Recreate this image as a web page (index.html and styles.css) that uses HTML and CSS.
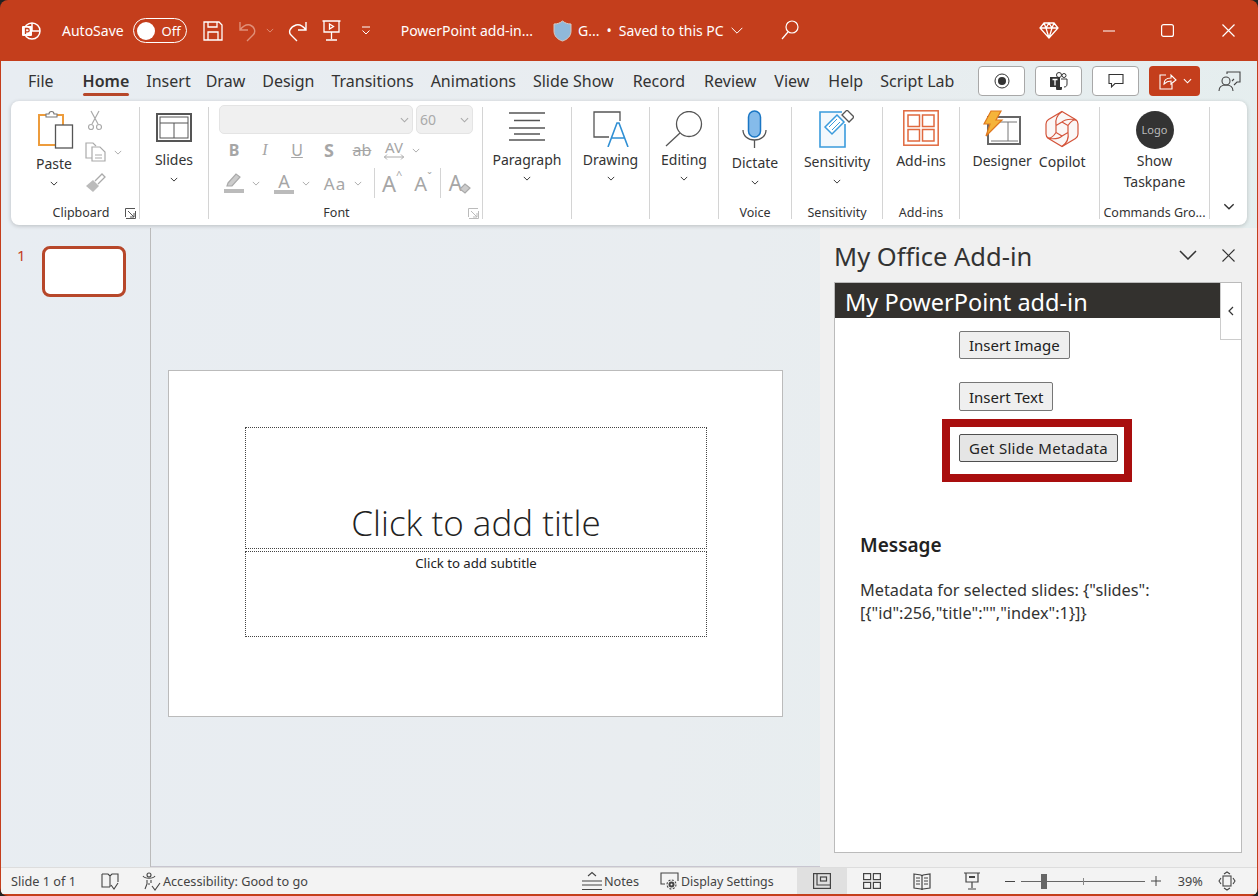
FILE: index.html
```html
<!DOCTYPE html>
<html lang="en">
<head>
  <meta charset="UTF-8" />
  <title>PowerPoint add-in</title>
  <link rel="stylesheet" href="styles.css">
</head>
<body>
<svg class="sprite" width="0" height="0">
  <symbol id="chev" viewBox="0 0 10 6"><path d="M1 1l4 4 4-4" fill="none" stroke="currentColor" stroke-width="1.2"/></symbol>
  <symbol id="chev-thin" viewBox="0 0 18 10"><path d="M1 1l8 8 8-8" fill="none" stroke="currentColor" stroke-width="1.5"/></symbol>
  <symbol id="launcher" viewBox="0 0 11 11"><path d="M.5 9V.5H10M3 3l6 6M9 5v4H5M1 10.5h9.5V3" fill="none" stroke="currentColor"/></symbol>
</svg>
<div class="window">
  <header class="titlebar">
    <svg class="tb-logo" width="20" height="20" viewBox="0 0 20 20" fill="none" stroke="#fff" stroke-width="1.5"><circle cx="11" cy="10" r="8"/><path d="M11 2v8h8"/><rect x="1" y="5" width="10" height="10" rx="1" fill="#fff" stroke="none"/><path d="M4.500 13V7.500h2a1.600 1.600 0 010 3.400h-2" stroke="#c43e1c" stroke-width="1.300"/></svg>
    <span class="tb-autosave">AutoSave</span>
    <span class="toggle"><i class="knob"></i><span>Off</span></span>
    <svg class="tb-save" width="20" height="20" viewBox="0 0 20 20" fill="none" stroke="#fff" stroke-width="1.300"><path d="M1 1h15l3 3v15H1zM5 1v5h9V1M5 19v-8h10v8"/></svg>
    <svg class="tb-undo" width="21" height="22" viewBox="0 0 21 22" fill="none" stroke="#e08f78" stroke-width="1.400"><path d="M2 2v8h8M2 10c3-4 6-6 10-5 5 2 6 7 3 10l-6 6"/></svg>
    <svg class="tb-undo-c" width="8" height="5"><use href="#chev" color="#e08f78"/></svg>
    <svg class="tb-redo" width="19" height="22" viewBox="0 0 19 22" fill="none" stroke="#fff" stroke-width="1.400"><path d="M18 2v8h-8M18 10c-3-4-6-6-10-5-6 2-8 7-5 10l6 6"/></svg>
    <svg class="tb-show" width="19" height="21" viewBox="0 0 19 21" fill="none" stroke="#fff" stroke-width="1.300"><path d="M.5 1h18M2 1v11h15V1M9.500 12v7M4 20h11"/><path d="M7.500 4l4 2.500-4 2.500z"/></svg>
    <svg class="tb-more" width="12" height="10" viewBox="0 0 12 10" fill="none" stroke="#fff"><path d="M2 1h8M2.500 4.500L6 8l3.500-3.500"/></svg>
    <span class="tb-file">PowerPoint add-in...</span>
    <svg class="tb-shield" width="19" height="22" viewBox="0 0 19 22"><path d="M9.500 1c2.500 2 5 3 8.500 3v7c0 5-3.500 8.500-8.500 10C4.500 19.500 1 16 1 11V4c3.500 0 6-1 8.500-3z" fill="#8fb8da" stroke="#d9c8c0"/></svg>
    <span class="tb-g">G...</span>
    <span class="tb-dot">•</span>
    <span class="tb-saved">Saved to this PC</span>
    <svg class="tb-saved-c" width="12" height="7"><use href="#chev-thin" color="#fff"/></svg>
    <svg class="tb-search" width="18" height="20" viewBox="0 0 18 20" fill="none" stroke="#fff" stroke-width="1.200"><circle cx="11" cy="7" r="6"/><path d="M7 12l-6 7"/></svg>
    <svg class="tb-gem" width="20" height="17" viewBox="0 0 20 17" fill="none" stroke="#fff" stroke-width="1.300"><path d="M5 1h10l4 5-9 10L1 6zM1 6h18M7 6l3 10 3-10M5 1l2 5 3-5 3 5 2-5"/></svg>
    <svg class="tb-min" width="12" height="2"><path d="M0 1h12" stroke="#fff" stroke-width="1.200"/></svg>
    <svg class="tb-max" width="13" height="13" viewBox="0 0 13 13"><rect x=".6" y=".6" width="11.800" height="11.800" rx="2" fill="none" stroke="#fff" stroke-width="1.200"/></svg>
    <svg class="tb-close" width="13" height="13" viewBox="0 0 13 13"><path d="M.5.5l12 12M12.500.5l-12 12" stroke="#fff" stroke-width="1.200"/></svg>
  </header>

  <div class="shell">
  <nav class="tabs">
    <a class="tab tab-file">File</a>
    <a class="tab tab-active">Home</a>
    <a class="tab">Insert</a>
    <a class="tab tab-draw">Draw</a>
    <a class="tab">Design</a>
    <a class="tab">Transitions</a>
    <a class="tab">Animations</a>
    <a class="tab">Slide Show</a>
    <a class="tab tab-nudge">Record</a>
    <a class="tab tab-nudge">Review</a>
    <a class="tab tab-view">View</a>
    <a class="tab tab-nudge">Help</a>
    <a class="tab">Script Lab</a>
    <div class="tab-actions">
      <button class="pill"><svg width="16" height="16" viewBox="0 0 16 16"><circle cx="8" cy="8" r="7" fill="none" stroke="#333"/><circle cx="8" cy="8" r="4" fill="#333"/></svg></button>
      <button class="pill"><svg width="19" height="18" viewBox="0 0 19 18"><circle cx="15" cy="3.500" r="2" fill="none" stroke="#333"/><circle cx="10" cy="3" r="2.500" fill="none" stroke="#333"/><path d="M12 7h6v5c0 2-1 3-3 3" fill="none" stroke="#333"/><rect x="1" y="5" width="10" height="10" fill="#333"/><path d="M3.500 7.500h5M6 7.500v6" stroke="#fff" stroke-width="1.300"/><path d="M7 15h6v1a2 2 0 01-6 0z" fill="#333"/></svg></button>
      <button class="pill"><svg width="16" height="16" viewBox="0 0 16 16" fill="none" stroke="#333" stroke-width="1.100"><path d="M1 1.500h14v9H7L3.500 14v-3.500H1z"/></svg></button>
      <button class="share"><svg width="19" height="19" viewBox="0 0 19 19" fill="none" stroke="#fff" stroke-width="1.100"><path d="M8 3H2v14h12v-6M6 12c0-4 3-6 7-6V3l5 5-5 4V9c-3 0-5 1-7 3z"/></svg><svg width="9" height="6"><use href="#chev" color="#fff"/></svg></button>
      <svg class="people" width="23" height="21" viewBox="0 0 23 21" fill="none" stroke="#444" stroke-width="1.100"><path d="M9 3V1h13v10h-3l-3 3M16 8l-2 2"/><circle cx="8" cy="10" r="4"/><path d="M1 20c0-4 3-6 7-6s7 2 7 6"/></svg>
    </div>
  </nav>

  <section class="ribbon">
    <div class="group g-clip">
      <div class="group-body clip-body">
        <div class="big paste">
          <svg width="36" height="39" viewBox="0 0 36 39" fill="none"><rect x="1" y="5" width="24" height="30" fill="#fff" stroke="#ed9c3c" stroke-width="2"/><path d="M8 7V4h3a2.500 2.500 0 015 0h3v3z" fill="#fff" stroke="#777" stroke-width="1.100"/><rect x="17.500" y="15" width="17" height="23" fill="#fff" stroke="#555" stroke-width="1.300"/></svg>
          <span class="big-label">Paste</span>
          <svg class="big-chev" width="8" height="5"><use href="#chev"/></svg>
        </div>
        <div class="clip-tools">
          <svg width="14" height="21" viewBox="0 0 14 21" fill="none" stroke="#aaa" stroke-width="1.200"><path d="M3 1l7 13M11 1L4 14"/><circle cx="3" cy="17" r="2.500"/><circle cx="11" cy="17" r="2.500"/></svg>
          <div class="copy-row">
            <svg width="21" height="20" viewBox="0 0 21 20" fill="none" stroke="#aaa" stroke-width="1.200"><path d="M7 16H1V1h7l3 3"/><path d="M7 5h8l5 5v9H7zM10 13h7M10 16h7"/></svg>
            <svg width="8" height="5"><use href="#chev" color="#aaa"/></svg>
          </div>
          <svg width="21" height="20" viewBox="0 0 21 20"><path d="M1 13l7-6 6 6-6 6z" fill="#bbb"/><path d="M10 8l7-7 3 3-7 7" fill="none" stroke="#aaa" stroke-width="1.300"/></svg>
        </div>
      </div>
      <div class="group-label label-clip">Clipboard</div>
      <svg class="launcher" width="11" height="11"><use href="#launcher"/></svg>
    </div>

    <div class="group g-slides">
      <div class="group-body">
        <div class="big slides">
          <svg width="36" height="29" viewBox="0 0 36 29" fill="none" stroke="#555"><rect x="1" y="1" width="34" height="27" stroke-width="2"/><rect x="4" y="4" width="28" height="21" stroke-width="1"/><path d="M4 10h28M18 10v15"/></svg>
          <span class="big-label">Slides</span>
          <svg class="big-chev" width="8" height="5"><use href="#chev"/></svg>
        </div>
      </div>
      <div class="group-label"></div>
    </div>

    <div class="group g-font">
      <div class="font-body">
        <div class="combos">
          <div class="combo combo-name"><svg width="9" height="6"><use href="#chev" color="#aaa"/></svg></div>
          <div class="combo combo-size"><span>60</span><svg width="9" height="6"><use href="#chev" color="#aaa"/></svg></div>
        </div>
        <div class="font-row row-one">
          <b class="fi fi-b">B</b><i class="fi fi-i">I</i><u class="fi fi-u">U</u><b class="fi fi-s">S</b><s class="fi fi-ab">ab</s>
          <span class="fi fi-av">AV<svg width="20" height="6" viewBox="0 0 20 6" fill="none" stroke="#aaa"><path d="M0 3h20M3 .5L.5 3 3 5.500M17 .5L19.500 3 17 5.500"/></svg></span>
          <svg class="fc" width="8" height="5"><use href="#chev" color="#aaa"/></svg>
        </div>
        <div class="font-row row-two">
          <span class="swatch sw-hl"><svg width="20" height="15" viewBox="0 0 20 15"><path d="M4 10l8-9 4 3-8 9H3z" fill="#ccc" stroke="#aaa" stroke-width="1.200"/></svg><i></i></span>
          <svg class="fc" width="8" height="5"><use href="#chev" color="#aaa"/></svg>
          <span class="swatch sw-a">A<i></i></span>
          <svg class="fc" width="8" height="5"><use href="#chev" color="#aaa"/></svg>
          <span class="fi fi-aa">Aa</span>
          <svg class="fc fc-aa" width="8" height="5"><use href="#chev" color="#aaa"/></svg>
          <span class="fsep"></span>
          <span class="fi fi-grow">A<sup>^</sup></span>
          <span class="fi fi-shrink">A<sup>ˇ</sup></span>
          <span class="fsep"></span>
          <span class="fi fi-clear">A<svg width="12" height="12" viewBox="0 0 12 12"><path d="M1 7l5-5 5 4-5 5z" fill="#ccc" stroke="#aaa" stroke-width="1.200"/></svg></span>
        </div>
      </div>
      <div class="group-label label-font">Font</div>
      <svg class="launcher" width="11" height="11"><use href="#launcher" color="#bbb"/></svg>
    </div>

    <div class="group g-para">
      <div class="group-body">
        <div class="big up up-para">
          <svg width="38" height="30" viewBox="0 0 38 30" stroke="#555" stroke-width="1.300"><path d="M1 2h36M6 9.500h26M1 17h36M6 23h26M1 29h36"/></svg>
          <span class="big-label">Paragraph</span>
          <svg class="big-chev" width="8" height="5"><use href="#chev"/></svg>
        </div>
      </div>
      <div class="group-label"></div>
    </div>

    <div class="group g-draw">
      <div class="group-body">
        <div class="big up">
          <svg width="36" height="36" viewBox="0 0 36 36" fill="none"><path d="M16 26H1V1h26v9" stroke="#555" stroke-width="1.300"/><path d="M15 36l9-24h2l9 24M18.500 27h13" stroke="#2f8fd4" stroke-width="1.600"/></svg>
          <span class="big-label">Drawing</span>
          <svg class="big-chev" width="8" height="5"><use href="#chev"/></svg>
        </div>
      </div>
      <div class="group-label"></div>
    </div>

    <div class="group g-edit">
      <div class="group-body">
        <div class="big up">
          <svg width="38" height="36" viewBox="0 0 38 36" fill="none" stroke="#555" stroke-width="1.300"><circle cx="24" cy="13" r="12.500"/><path d="M15 22L1 35"/></svg>
          <span class="big-label">Editing</span>
          <svg class="big-chev" width="8" height="5"><use href="#chev"/></svg>
        </div>
      </div>
      <div class="group-label"></div>
    </div>

    <div class="group g-voice">
      <div class="group-body">
        <div class="big low">
          <svg width="25" height="38" viewBox="0 0 25 38" fill="none"><rect x="6.500" y="1" width="12" height="26" rx="6" fill="#85bbea" stroke="#1a76c4" stroke-width="1.500"/><path d="M1 20c0 6 5 10 11.500 10S24 26 24 20M12.500 30v8" stroke="#555" stroke-width="1.300"/></svg>
          <span class="big-label">Dictate</span>
          <svg class="big-chev" width="8" height="5"><use href="#chev"/></svg>
        </div>
      </div>
      <div class="group-label">Voice</div>
    </div>

    <div class="group g-sens">
      <div class="group-body">
        <div class="big low tight">
          <svg width="35" height="38" viewBox="0 0 35 38" fill="none"><path d="M23 2H1v35h25V14" fill="#f3f8fc" stroke="#3a9bdc" stroke-width="1.600"/><path d="M6 17L18 5l7 7L13 24z" fill="#fff" stroke="#3a9bdc" stroke-width="1.500"/><path d="M10 17l8-8M13 20l8-8" stroke="#3a9bdc"/><path d="M23 5l5-5 7 7-5 5z" fill="#fff" stroke="#555" stroke-width="1.300"/></svg>
          <span class="big-label">Sensitivity</span>
          <svg class="big-chev" width="8" height="5"><use href="#chev"/></svg>
        </div>
      </div>
      <div class="group-label">Sensitivity</div>
    </div>

    <div class="group g-addins">
      <div class="group-body">
        <div class="big low">
          <svg width="36" height="36" viewBox="0 0 36 36" fill="none" stroke="#e0693f" stroke-width="1.500"><rect x=".8" y=".8" width="34.400" height="34.400"/><rect x="5" y="5" width="11.500" height="11.500"/><rect x="19.500" y="5" width="11.500" height="11.500"/><rect x="5" y="19.500" width="11.500" height="11.500"/><rect x="19.500" y="19.500" width="11.500" height="11.500"/></svg>
          <span class="big-label">Add-ins</span>
        </div>
      </div>
      <div class="group-label">Add-ins</div>
    </div>

    <div class="group g-design">
      <div class="group-body design-body">
        <div class="big low">
          <svg width="38" height="36" viewBox="0 0 38 36" fill="none"><rect x="5" y="7" width="32" height="27" fill="#fff" stroke="#666" stroke-width="2"/><path d="M10 12h24M25 12v19M8 31h27" stroke="#777"/><path d="M8 1h10l-5 9h6L3 26l4-12H1z" fill="#f5b43a" stroke="#e0781e" stroke-width="1.200"/></svg>
          <span class="big-label">Designer</span>
        </div>
        <div class="big low tight">
          <svg width="36" height="38" viewBox="0 0 36 38" fill="none" stroke="#d4543a" stroke-width="1.200"><path d="M18 1.500L31.500 9.500Q34 11 34 14V24Q34 27 31.500 28.500L18 36.500 4.500 28.500Q2 27 2 24V14Q2 11 4.500 9.500Z" fill="#fbf7f6"/><path d="M18 12l6 3.500v7L18 26l-6-3.500v-7zM12 15.500C11 10 13 5 18 1.500M24 15.500C27 11 30 9 33 10.500M24 22.500C25 28 23 33 18 36.500M12 22.500C9 27 6 29 3 27.500M18 12C21 9 27 9 31.500 9.500M18 26C15 29 9 29 4.500 28.500"/></svg>
          <span class="big-label">Copilot</span>
        </div>
      </div>
      <div class="group-label"></div>
    </div>

    <div class="group g-cmd">
      <div class="group-body">
        <div class="big low">
          <span class="logo-disc">Logo</span>
          <span class="big-label two-line">Show<br>Taskpane</span>
        </div>
      </div>
      <div class="group-label">Commands Gro...</div>
    </div>

    <svg class="ribbon-collapse" width="12" height="7"><use href="#chev"/></svg>
  </section>

  <main class="work">
    <aside class="thumbs">
      <span class="thumb-num">1</span>
      <div class="thumb"></div>
    </aside>
    <section class="canvas">
      <div class="slide">
        <div class="ph ph-title">Click to add title</div>
        <div class="ph ph-sub">Click to add subtitle</div>
      </div>
    </section>
    <aside class="pane">
      <div class="pane-head">
        <h2>My Office Add-in</h2>
        <svg width="18" height="10"><use href="#chev-thin"/></svg>
        <svg width="13" height="13" viewBox="0 0 13 13"><path d="M.5.5l12 12M12.500.5l-12 12" stroke="#333" stroke-width="1.100"/></svg>
      </div>
      <div class="pane-frame">
        <div class="addin-top">
          <h1>My PowerPoint add-in</h1>
          <div class="addin-collapse"><svg width="6" height="10" viewBox="0 0 6 10"><path d="M5 1L1 5l4 4" fill="none" stroke="#333" stroke-width="1.200"/></svg></div>
        </div>
        <div class="addin-actions">
          <button class="btn">Insert Image</button>
          <button class="btn btn-text">Insert Text</button>
          <div class="callout"><button class="btn btn-on">Get Slide Metadata</button></div>
        </div>
        <div class="message">
          <h3>Message</h3>
          <p>Metadata for selected slides: {"slides":<br>[{"id":256,"title":"","index":1}]}</p>
        </div>
      </div>
    </aside>
  </main>
  </div>

  <footer class="status">
    <span class="st-slide">Slide 1 of 1</span>
    <svg class="st-book" width="18" height="17" viewBox="0 0 18 17" fill="none" stroke="#444" stroke-width="1.100"><path d="M1 1h6l2 2 2-2h6v8M9 3v11M1 1v13h8M10 12l3 4 4-6"/></svg>
    <svg class="st-acc" width="19" height="19" viewBox="0 0 19 19" fill="none" stroke="#444" stroke-width="1.100"><circle cx="7" cy="3" r="2"/><path d="M1 4c2 3 10 3 12 0M5 8v4l-2 5M9 8v3M6 12h2M10 14l3 4 5-7"/></svg>
    <span class="st-text">Accessibility: Good to go</span>
    <svg class="st-notes" width="20" height="20" viewBox="0 0 20 20" fill="none" stroke="#444" stroke-width="1.100"><path d="M6 5l4-3.500L14 5M0 10h20M0 14h20M0 18.500h20"/></svg>
    <span class="st-text">Notes</span>
    <svg class="st-disp" width="19" height="18" viewBox="0 0 19 18" fill="none" stroke="#444" stroke-width="1.100"><path d="M5 12H1V1h17v8"/><circle cx="11.500" cy="12.500" r="2" stroke-width="2"/><circle cx="11.500" cy="12.500" r="4.500" stroke-dasharray="2 1.500"/></svg>
    <span class="st-text st-display">Display Settings</span>
    <span class="view view-on"><svg width="18" height="16" viewBox="0 0 18 16" fill="none" stroke="#444" stroke-width="1.200"><rect x=".6" y=".6" width="16.800" height="14.800"/><path d="M4 1v11h13"/><rect x="7.500" y="4" width="6" height="4"/></svg></span>
    <span class="view"><svg width="18" height="16" viewBox="0 0 18 16" fill="none" stroke="#444" stroke-width="1.200"><rect x=".6" y=".6" width="7" height="6"/><rect x="10.400" y=".6" width="7" height="6"/><rect x=".6" y="9.400" width="7" height="6"/><rect x="10.400" y="9.400" width="7" height="6"/></svg></span>
    <span class="view"><svg width="18" height="18" viewBox="0 0 18 18" fill="none" stroke="#444" stroke-width="1.200"><path d="M1 2l7 1 1 1 1-1 7-1v14l-7 1-1 .5-1-.5-7-1zM9 4v13M3 6h4M3 9h4M3 12h4M11 6h4M11 9h4M11 12h4"/></svg></span>
    <span class="view"><svg width="16" height="18" viewBox="0 0 16 18" fill="none" stroke="#444" stroke-width="1.200"><path d="M0 1h16M2 1v9h12V1M8 10v6M4 17h8"/><path d="M5 5h6" stroke-width="2"/></svg></span>
    <span class="zoom-minus"></span>
    <div class="zoom-track"><i class="zoom-tick"></i><i class="zoom-thumb"></i></div>
    <svg class="zoom-plus" width="10" height="10"><path d="M0 5h10M5 0v10" stroke="#444"/></svg>
    <span class="st-text st-pct">39%</span>
    <svg class="st-fit" width="18" height="20" viewBox="0 0 18 20" fill="none" stroke="#444" stroke-width="1.100"><rect x="5" y="5" width="8" height="10"/><path d="M3 7l-2 3 2 3M15 7l2 3-2 3M6 3l3-2 3 2M6 17l3 2 3-2"/></svg>
  </footer>
</div>
</body>
</html>
```

FILE: styles.css
```css
* {
  box-sizing: border-box;
}
html, body {
  margin: 0;
  height: 100%;
  background: #222;
  overflow: hidden;
}
body {
  font-family: "Noto Sans", "Open Sans", sans-serif;
  color: #333;
}
.sprite {
  display: block;
  position: absolute;
}
svg {
  display: block;
  flex: none;
}
.window {
  height: 896px;
  display: flex;
  flex-direction: column;
  background: #c43e1c;
  border-radius: 8px;
  overflow: hidden;
  padding: 0 1px 2px 1px;
}
.shell {
  flex: 1;
  min-height: 0;
  display: flex;
  flex-direction: column;
  background: linear-gradient(100deg, #e8edf2, #e9edf0 55%, #e4eeee);
}

/* title bar */
.titlebar {
  height: 61px;
  flex: none;
  display: flex;
  align-items: center;
  color: #fff;
  font-size: 14px;
  padding-left: 20px;
}
.tb-autosave { margin-left: 21px; }
.toggle {
  width: 54px;
  height: 25px;
  margin-left: 9px;
  border: 1px solid #fff;
  border-radius: 13px;
  display: flex;
  align-items: center;
  padding: 0 5px 0 3px;
  justify-content: space-between;
  font-size: 13px;
}
.knob {
  width: 18px;
  height: 18px;
  border-radius: 50%;
  background: #fff;
}
.tb-save { margin-left: 16px; }
.tb-undo { margin-left: 15px; }
.tb-undo-c { margin-left: 7px; }
.tb-redo { margin-left: 14px; }
.tb-show { margin-left: 15px; }
.tb-more { margin-left: 19px; }
.tb-file { margin-left: 29px; }
.tb-shield { margin-left: 20px; }
.tb-g { margin-left: 6px; }
.tb-dot { margin-left: 7px; }
.tb-saved { margin-left: 7px; }
.tb-saved-c { margin-left: 7px; }
.tb-search { margin-left: 38px; margin-top: -1px; }
.tb-gem { margin-left: auto; margin-right: 44px; }
.tb-min { margin-right: 46px; }
.tb-max { margin-right: 48px; }
.tb-close { margin-right: 22px; }

/* tabs */
.tabs {
  height: 40px;
  flex: none;
  display: flex;
  align-items: center;
  gap: 17px;
  font-size: 16px;
  padding-left: 27px;
  color: #333;
}
.tab-file { margin-right: 12px; }
.tab-draw { margin-left: -2px; }
.tab-nudge { margin-left: 2px; }
.tab-view { margin-left: 1px; }
.tab-active {
  font-weight: 600;
  position: relative;
}
.tab-active::after {
  content: "";
  position: absolute;
  left: 0;
  right: 0;
  bottom: -4px;
  height: 3px;
  border-radius: 2px;
  background: #b7472a;
}
.tab-actions {
  margin-left: auto;
  display: flex;
  align-items: center;
  gap: 10px;
  padding-right: 16px;
}
.pill, .share {
  width: 47px;
  height: 30px;
  padding: 0;
  background: #fff;
  border: 1px solid #a8a8a8;
  border-radius: 4px;
  display: flex;
  align-items: center;
  justify-content: center;
}
.share {
  width: 51px;
  background: #c43e1c;
  border: 0;
  gap: 6px;
}
.people { margin-left: 8px; }

/* ribbon */
.ribbon {
  height: 124px;
  flex: none;
  display: flex;
  background: #fff;
  border-radius: 8px;
  padding-top: 6px;
  box-shadow: 0 1px 4px rgba(0,0,0,0.2);
  position: relative;
  margin: 0 10px 3px 10px;
}
.group {
  height: 112px;
  display: flex;
  flex-direction: column;
  border-right: 1px solid #d4d4d4;
  position: relative;
  flex: none;
}
.group-body {
  height: 96px;
  flex: none;
  display: flex;
  justify-content: center;
}
.group-label {
  height: 16px;
  flex: none;
  font-size: 12.500px;
  line-height: 16px;
  text-align: center;
  white-space: nowrap;
  margin-top: 2px;
}
.label-clip { padding-left: 12px; }
.label-font {
  padding-right: 18px;
  margin-top: 4px;
}
.g-clip { width: 129px; }
.g-slides { width: 69px; }
.g-font { width: 274px; }
.g-para { width: 89px; }
.g-draw { width: 78px; }
.g-edit { width: 69px; }
.g-voice { width: 73px; }
.g-sens { width: 91px; }
.g-addins { width: 77px; }
.g-design { width: 140px; }
.g-cmd { width: 110px; }
.big {
  display: flex;
  flex-direction: column;
  align-items: center;
  padding-top: 3px;
  font-size: 14px;
  color: #333;
}
.big-label {
  line-height: 20px;
  margin-top: 2px;
  text-align: center;
  white-space: nowrap;
}
.big-chev { margin-top: 7px; }
.up .big-label { margin-top: 0; }
.up svg:first-child { margin-top: 1px; margin-bottom: 3px; }
.up-para svg:first-child { margin-bottom: 9px; }
.up .big-chev { margin-top: 6px; }
.low svg:first-child { margin-bottom: 3px; }
.tight svg:first-child { margin-bottom: 2px; }
.slides svg:first-child { margin: 3px 0 8px; }
.slides .big-label { margin-top: 0; }
.clip-body {
  justify-content: flex-start;
  padding-left: 25px;
  gap: 7px;
}
.clip-tools {
  display: flex;
  flex-direction: column;
  align-items: flex-start;
  padding-top: 3px;
  gap: 11px;
  margin-left: 2px;
}
.clip-tools > svg:first-child { margin-left: 3px; }
.copy-row {
  display: flex;
  align-items: center;
  gap: 8px;
}
.paste .big-label {
  margin-top: 5px;
  margin-right: 4px;
}
.paste .big-chev { margin-right: 4px; }
.launcher {
  position: absolute;
  right: 3px;
  bottom: 0;
  color: #555;
}

/* font group */
.font-body {
  height: 96px;
  flex: none;
  padding: 0 0 0 10px;
  margin-top: -2px;
}
.combos {
  display: flex;
  gap: 3px;
}
.combo {
  height: 29px;
  background: #f0f0f0;
  border: 1px solid #e4e4e4;
  border-radius: 5px;
  display: flex;
  align-items: center;
  justify-content: flex-end;
  padding-right: 3px;
  color: #aaa;
  font-size: 14px;
}
.combo-name { width: 194px; }
.combo-size {
  width: 57px;
  justify-content: space-between;
  padding-left: 3px;
}
.font-row {
  display: flex;
  align-items: center;
  color: #a6a6a6;
}
.row-one {
  height: 26px;
  margin-top: 3px;
}
.row-two {
  height: 30px;
  margin-top: 5px;
}
.fi {
  font-size: 16px;
  text-align: center;
  text-decoration-thickness: 1px;
  flex: none;
}
.fi-b { width: 14px; margin-left: 8px; }
.fi-i { width: 12px; margin-left: 18px; font-family: "Liberation Serif", serif; }
.fi-u { width: 14px; margin-left: 19px; }
.fi-s { width: 14px; margin-left: 18px; font-size: 18px; }
.fi-ab { width: 20px; margin-left: 16px; }
.fi-av {
  width: 20px;
  margin-left: 12px;
  line-height: 14px;
  font-size: 15px;
}
.fc { margin-left: 8px; }
.swatch {
  display: flex;
  flex-direction: column;
  align-items: center;
  width: 20px;
  font-size: 18px;
  line-height: 16px;
}
.swatch i {
  width: 20px;
  height: 4px;
  background: #bbb;
  margin-top: 1px;
}
.sw-hl { margin-left: 5px; }
.sw-a { margin-left: 14px; }
.fi-aa {
  margin-left: 11px;
  width: 28px;
  font-size: 17px;
  letter-spacing: 1px;
}
.fc-aa { margin-left: 5px; }
.fsep {
  width: 1px;
  height: 30px;
  background: #d4d4d4;
  margin-left: 12px;
}
.fi-grow {
  margin-left: 7px;
  font-size: 22px;
  display: flex;
}
.fi-grow sup, .fi-shrink sup {
  font-size: 11px;
  line-height: 14px;
}
.fi-shrink {
  margin-left: 12px;
  font-size: 20px;
  display: flex;
}
.fi-shrink + .fsep { margin-left: 8px; }
.fi-clear {
  margin-left: 8px;
  font-size: 21px;
  display: flex;
  align-items: flex-end;
}
.fi-clear svg { margin-left: -3px; margin-bottom: 3px; }

/* designer and logo */
.design-body {
  gap: 7px;
  padding-right: 1px;
}
.logo-disc {
  width: 38px;
  height: 38px;
  border-radius: 50%;
  background: #333;
  color: #bbb;
  font-size: 11px;
  line-height: 38px;
  text-align: center;
  margin-top: 1px;
  margin-bottom: -1px;
}
.two-line { line-height: 21px; }
.ribbon-collapse {
  position: absolute;
  right: 12px;
  bottom: 15px;
}

/* work area */
.work {
  flex: 1;
  min-height: 0;
  display: flex;
}
.thumbs {
  width: 150px;
  flex: none;
  border-right: 1px solid #bbb;
  display: flex;
  align-items: flex-start;
  padding: 18px 0 0 16px;
}
.thumb-num {
  color: #c43e1c;
  font-size: 15px;
  width: 25px;
  line-height: 18px;
}
.thumb {
  width: 84px;
  height: 51px;
  background: #fff;
  border: 3px solid #b7472a;
  border-radius: 8px;
}
.canvas {
  width: 669px;
  flex: none;
  border-bottom: 1px solid #c8c6d0;
  padding: 142px 0 0 17px;
}
.slide {
  width: 615px;
  height: 347px;
  background: #fff;
  border: 1px solid #bbb;
  padding: 56px 0 0 76px;
}
.ph {
  width: 462px;
  border: 1px dotted #444;
  text-align: center;
  color: #222;
}
.ph-title {
  height: 122px;
  font-family: "Open Sans", sans-serif;
  font-weight: 300;
  font-size: 35px;
  line-height: 40px;
  padding-top: 75px;
}
.ph-sub {
  height: 86px;
  margin-top: 2px;
  font-size: 13.200px;
  line-height: 18px;
  padding-top: 2px;
}

/* task pane */
.pane {
  flex: 1;
  background: #f0f0f0;
  padding: 0 15px 14px 14px;
  display: flex;
  flex-direction: column;
}
.pane-head {
  height: 54px;
  flex: none;
  display: flex;
  align-items: center;
}
.pane-head h2 {
  margin: 2px auto 0 0;
  font-size: 25.500px;
  font-weight: 400;
  color: #333;
}
.pane-head svg:last-child { margin: 0 7px 0 25px; }
.pane-frame {
  flex: 1;
  background: #fff;
  border: 1px solid #bbb;
}
.addin-top {
  display: flex;
  align-items: flex-start;
}
.addin-top h1 {
  flex: 1;
  height: 35px;
  margin: 0;
  background: #33312e;
  color: #fff;
  font-size: 23.500px;
  font-weight: 400;
  line-height: 38px;
  padding-left: 10px;
}
.addin-collapse {
  width: 21px;
  height: 57px;
  border: 1px solid #ccc;
  border-top: 0;
  border-right: 0;
  display: flex;
  align-items: center;
  justify-content: center;
}
.addin-actions {
  margin-top: -9px;
  padding-left: 124px;
  display: flex;
  flex-direction: column;
  align-items: flex-start;
}
.btn {
  height: 28px;
  padding: 0 9px;
  background: #efefef;
  border: 1px solid #767676;
  border-radius: 2px;
  font-family: inherit;
  font-size: 15px;
  color: #222;
  white-space: nowrap;
}
.btn-text {
  height: 29px;
  margin-top: 23px;
}
.btn-on {
  background: #e5e5e5;
  border-color: #4f4f4f;
  letter-spacing: .3px;
}
.callout {
  margin: 8px 0 0 -17px;
  border: 8px solid #a90e0e;
  padding: 7px 0 12px 9px;
  background: #fff;
  width: 190px;
  height: 63px;
}
.message {
  padding: 51px 25px 0 25px;
}
.message h3 {
  margin: 0;
  font-size: 19px;
  font-weight: 600;
  line-height: 24px;
  color: #222;
}
.message p {
  margin: 22px 0 0;
  font-size: 16.300px;
  line-height: 23px;
  color: #333;
}

/* status bar */
.status {
  height: 27px;
  flex: none;
  display: flex;
  align-items: center;
  background: #f3f3f3;
  border-top: 1px solid #ddd;
  font-size: 12.700px;
  color: #444;
  padding-left: 10px;
}
.st-book { margin-left: 25px; }
.st-acc { margin-left: 23px; margin-right: 2px; }
.st-notes { margin-left: 274px; margin-right: 2px; }
.st-disp { margin-left: 21px; margin-right: 2px; }
.st-display { font-size: 12.400px; }
.view {
  width: 50px;
  height: 26px;
  display: flex;
  align-items: center;
  justify-content: center;
}
.view-on {
  background: #e0e0e0;
  margin-left: 23px;
}
.zoom-minus {
  width: 10px;
  height: 1px;
  background: #444;
  margin-left: 8px;
}
.zoom-track {
  width: 124px;
  height: 1px;
  background: #666;
  margin-left: 6px;
  display: flex;
  align-items: center;
  position: relative;
}
.zoom-thumb {
  position: absolute;
  left: 20px;
  top: -7px;
  width: 6px;
  height: 15px;
  background: #666;
}
.zoom-tick {
  position: absolute;
  left: 62px;
  top: -3px;
  width: 1px;
  height: 7px;
  background: #888;
}
.zoom-plus { margin-left: 6px; }
.st-pct { margin-left: 17px; }
.st-fit { margin-left: 15px; }
```
